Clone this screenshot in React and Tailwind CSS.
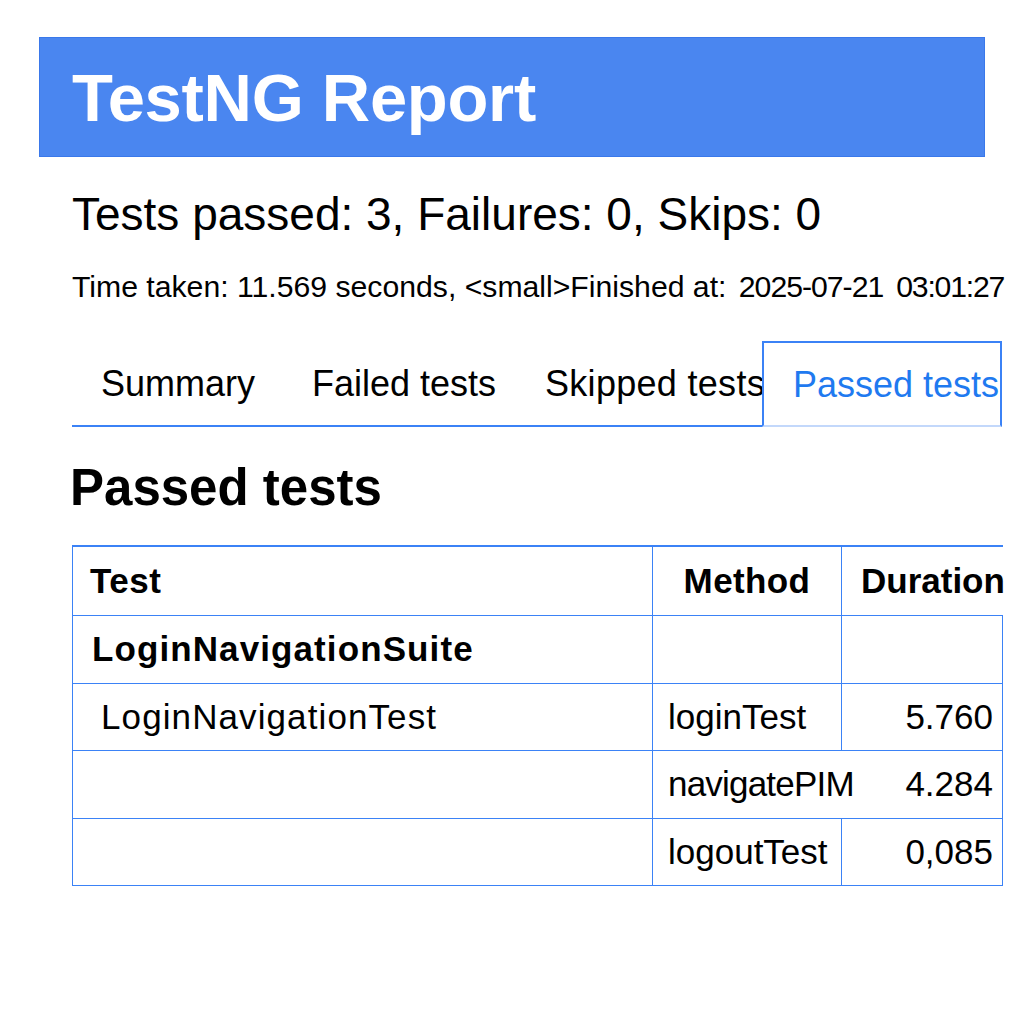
const rows = [
  { test: 'LoginNavigationSuite', suite: true, method: '', dur: '' },
  { test: 'LoginNavigationTest', method: 'loginTest', dur: '5.760' },
  { test: '', method: 'navigatePIM', dur: '4.284', spill: true },
  { test: '', method: 'logoutTest', dur: '0,085' },
]

const line = 'border-[#3b82f6]'

export default function App() {
  return <div className="min-h-screen bg-white text-black font-['Liberation_Sans',Arial,sans-serif] pt-[37px]">
    <div className="ml-[39px] w-[946px] h-[120px] bg-[#4a86f0] border border-[#3a78ea] flex items-center pl-[32px]">
      <h1 className="text-[67px] font-bold text-white leading-none tracking-[-0.3px]">TestNG Report</h1>
    </div>

    <div className="pl-[72px]">
      <p className="mt-[31px] text-[46px] leading-[1.15]">Tests passed: 3, Failures: 0, Skips: 0</p>
      <p className="mt-[29px] text-[30.2px] leading-[1.15] whitespace-nowrap">Time taken: 11.569 seconds, &lt;small&gt;Finished at: <span className="ml-[4px] tracking-[-1px]">2025-07-21</span><span className="ml-[13px] tracking-[-1.2px]">03:01:27</span></p>

      <div className="mt-[36px] flex w-[930px] h-[86px] text-[36px]">
        <div className={`w-[212px] flex items-center pt-[2px] pl-[29px] border-b-2 ${line}`}>Summary</div>
        <div className={`w-[233px] flex items-center pt-[2px] pl-[28px] border-b-2 ${line}`}>Failed tests</div>
        <div className={`w-[245px] flex items-center pt-[2px] pl-[28px] border-b-2 ${line} whitespace-nowrap tracking-[0.3px]`}>Skipped tests</div>
        <div className={`w-[240px] flex items-center pt-[2px] pl-[29px] border-2 ${line} border-b-[#c3d8fb] text-[#1f7af0] whitespace-nowrap`}>Passed tests</div>
      </div>

      <h2 className="mt-[32px] text-[51px] font-bold leading-[1.15] -ml-[2px]">Passed tests</h2>

      <table className="mt-[28px] w-[931px] table-fixed border-separate border-spacing-0 text-[35px]">
        <colgroup>
          <col className="w-[581px]" />
          <col className="w-[189px]" />
          <col className="w-[161px]" />
        </colgroup>
        <thead>
          <tr className="h-[71px]">
            <th className={`border-t-2 border-l border-b border-r ${line} text-left font-bold pl-[17px] tracking-[0.5px]`}>Test</th>
            <th className={`border-t-2 border-b border-r ${line} text-center font-bold tracking-[0.4px]`}>Method</th>
            <th className={`border-t-2 border-b ${line} text-left font-bold pl-[19px] whitespace-nowrap overflow-visible`}>Duration</th>
          </tr>
        </thead>
        <tbody>
          {rows.map((r, i) => <tr key={i} className="h-[67.5px]">
            <td className={`border-l border-b border-r ${line} ${r.suite ? 'font-bold pl-[19px]' : 'pl-[28px]'} whitespace-nowrap tracking-[1.1px]`}>{r.test}</td>
            <td className={`border-b ${r.spill ? 'tracking-[-0.8px]' : 'border-r'} ${line} pl-[15px] whitespace-nowrap overflow-visible`}>{r.method}</td>
            <td className={`border-b border-r ${line} text-right pr-[9px]`}>{r.dur}</td>
          </tr>)}
        </tbody>
      </table>
    </div>
  </div>
}
